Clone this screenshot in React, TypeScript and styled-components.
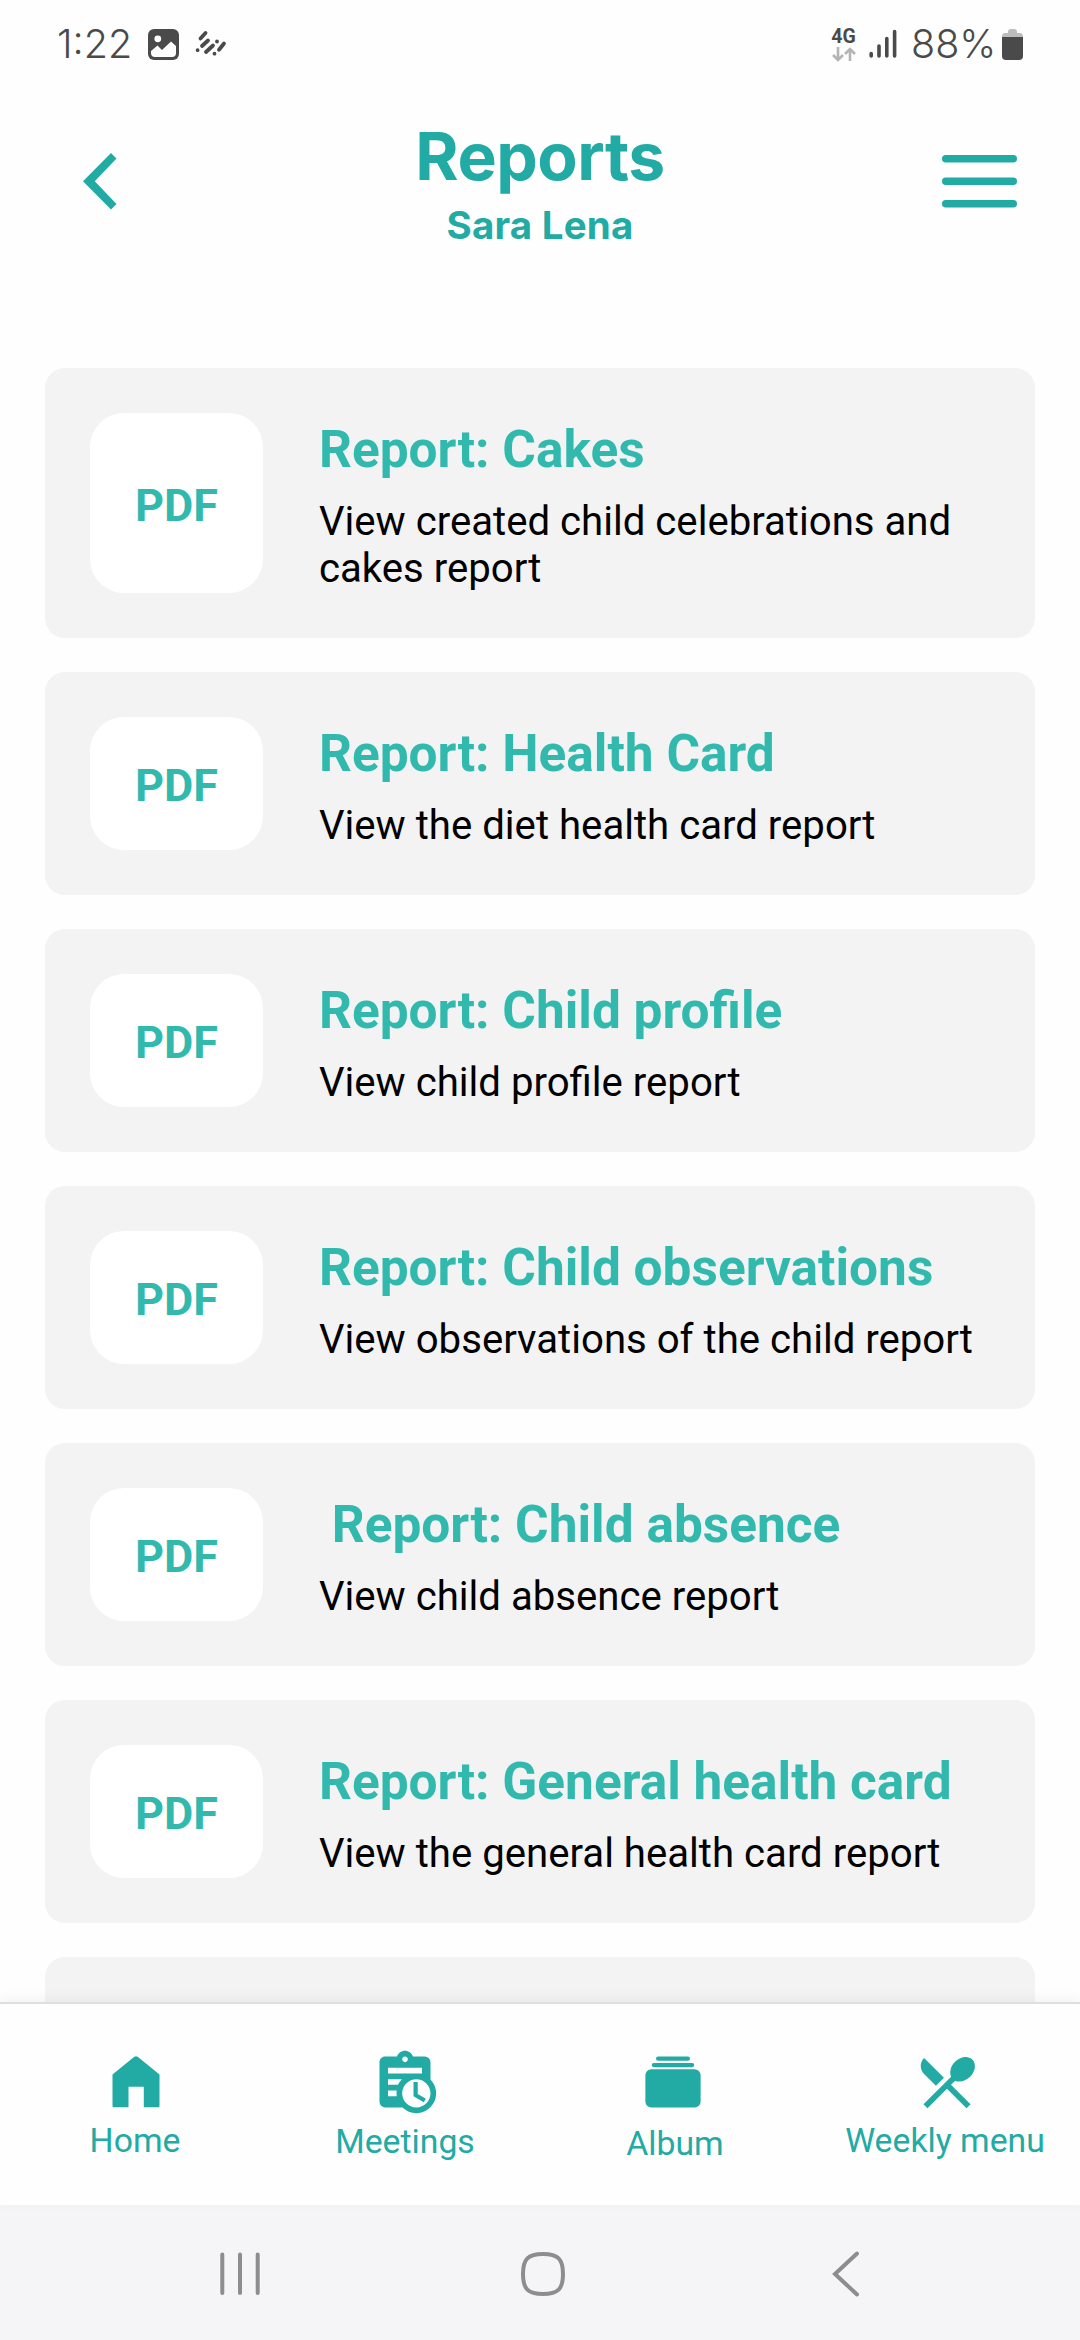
import React from 'react';
import styled, { createGlobalStyle } from 'styled-components';

const teal = '#22aaa4';
const tealSoft = '#32b9ae';
const ink = '#4a4a4a';

const GlobalStyle = createGlobalStyle`
  * { box-sizing: border-box; }
  body { margin: 0; background: #fefefe; }
`;

const Screen = styled.div`
  display: flex;
  flex-direction: column;
  width: 1080px;
  height: 2340px;
  overflow: hidden;
  background: #fefefe;
  font-family: Roboto, 'Liberation Sans', sans-serif;
`;

const Icon = styled.svg<{ $left?: number; $right?: number }>`
  display: block;
  flex: none;
  margin-left: ${p => p.$left ?? 0}px;
  margin-right: ${p => p.$right ?? 0}px;
`;

const StatusBar = styled.div`
  display: flex;
  align-items: center;
  justify-content: space-between;
  height: 88px;
  padding: 0 57px;
  color: ${ink};
`;

const StatusGroup = styled.div`
  display: flex;
  align-items: center;
`;

const StatusText = styled.span<{ $left?: number }>`
  width: 91px;
  margin-left: ${p => p.$left ?? 0}px;
  font: 300 39.5px/48px Inter, sans-serif;
  white-space: nowrap;
`;

const Network = styled.div`
  display: flex;
  flex-direction: column;
  align-items: center;
  width: 27px;
  margin-right: 12px;
  font: 700 19.5px/20px Roboto, sans-serif;
`;

const Header = styled.header`
  display: flex;
  align-items: flex-start;
  justify-content: space-between;
  height: 280px;
  padding: 0 63px 0 83px;
`;

const IconButton = styled.button`
  display: flex;
  width: 75px;
  margin: 65px 0 0;
  padding: 0;
  border: 0;
  background: none;
`;

const Heading = styled.div`
  display: flex;
  flex-direction: column;
  align-items: center;
  padding-top: 29px;
  margin-left: -20px;
  color: ${teal};
  font-family: Inter, Lato, sans-serif;
  white-space: nowrap;
`;

const Title = styled.h1`
  margin: 0;
  font-size: 66px;
  font-weight: 700;
  line-height: 78px;
  letter-spacing: -0.5px;
`;

const Subtitle = styled.p`
  margin: 8px 0 0;
  font-size: 38.5px;
  font-weight: 700;
  line-height: 44px;
  letter-spacing: 0.2px;
`;

const List = styled.main`
  display: flex;
  flex: 1;
  flex-direction: column;
  gap: 34px;
  min-height: 0;
  padding: 0 45px;
  overflow: hidden;
`;

const Card = styled.article`
  display: flex;
  flex: none;
  gap: 56px;
  padding: 45px;
  border-radius: 20px;
  background: #f3f3f3;
`;

const Badge = styled.div`
  display: flex;
  flex: none;
  align-items: center;
  justify-content: center;
  width: 173px;
  padding-top: 4px;
  border-radius: 34px;
  background: #fff;
  color: ${tealSoft};
  font-size: 45px;
  font-weight: 700;
`;

const CardBody = styled.div`
  flex: 1;
  min-width: 0;
  padding: 7px 0 1px;
`;

const CardTitle = styled.h2`
  margin: 0 0 18px;
  color: ${tealSoft};
  font-size: 51.4px;
  font-weight: 700;
  line-height: 60px;
  white-space: pre;
`;

const CardText = styled.p`
  margin: 0 -10px 0 0;
  color: #000;
  font-size: 40.15px;
  line-height: 47px;
`;

const TabBar = styled.nav`
  position: relative;
  display: grid;
  flex: none;
  grid-template-columns: repeat(4, 1fr);
  height: 203px;
  border-top: 2px solid #dfdfdf;
  background: #fefefe;
  box-shadow: 0 -3px 12px rgba(0, 0, 0, 0.05);
`;

const Tab = styled.a<{ $drop: number }>`
  display: flex;
  flex-direction: column;
  align-items: center;
  padding-top: 44px;
  color: ${teal};
  font-size: 33.75px;
  line-height: 40px;
  white-space: nowrap;

  span { margin-top: ${p => p.$drop}px; }
`;

const SystemBar = styled.footer`
  display: flex;
  flex: none;
  align-items: center;
  justify-content: space-between;
  height: 135px;
  padding: 2px 220px 0 218px;
  background: #f5f5f7;
`;

const reports = [
  { title: 'Report: Cakes', text: 'View created child celebrations and cakes report' },
  { title: 'Report: Health Card', text: 'View the diet health card report' },
  { title: 'Report: Child profile', text: 'View child profile report' },
  { title: 'Report: Child observations', text: 'View observations of the child report' },
  { title: ' Report: Child absence', text: 'View child absence report' },
  { title: 'Report: General health card', text: 'View the general health card report' },
];

const HomeIcon = () => (
  <Icon width="68" height="68" viewBox="0 0 68 68" fill={teal} $left={2}>
    <path d="M10.5 26.5 32.3 8.8Q34 7.5 35.7 8.8L57.5 26.5V58Q57.5 59.3 56.2 59.3H41.8V38.7H26.5V59.3H11.8Q10.5 59.3 10.5 58Z" />
  </Icon>
);

const MeetingsIcon = () => (
  <Icon width="68" height="68" viewBox="0 0 24 24" fill={teal}>
    <path d="M21 11.11V5a2 2 0 0 0-2-2h-4.18C14.4 1.84 13.3 1 12 1s-2.4.84-2.82 2H5c-1.1 0-2 .9-2 2v14a2 2 0 0 0 2 2h6.11c1.26 1.24 2.99 2 4.89 2 3.87 0 7-3.13 7-7 0-1.9-.76-3.63-2-4.89zM12 3c.55 0 1 .45 1 1s-.45 1-1 1-1-.45-1-1 .45-1 1-1zM6 7h12v2H6V7zm0 4h4.9c-.6.58-1.07 1.25-1.4 2H6v-2zm0 6v-2h3.08c-.11.66-.11 1.34 0 2H6zm10 4c-2.76 0-5-2.24-5-5s2.24-5 5-5 5 2.24 5 5-2.24 5-5 5zm.5-4.75 2.86 1.69-.75 1.22L15 17v-5h1.5v4.25z" />
  </Icon>
);

const AlbumIcon = () => (
  <Icon width="68" height="68" viewBox="0 0 512 512" fill={teal} $right={4}>
    <path d="M368 96H144a16 16 0 0 1 0-32h224a16 16 0 0 1 0 32zM400 144H112a16 16 0 0 1 0-32h288a16 16 0 0 1 0 32zM419.13 448H92.87A44.92 44.92 0 0 1 48 403.13V204.87A44.92 44.92 0 0 1 92.87 160h326.26A44.92 44.92 0 0 1 464 204.87v198.26A44.92 44.92 0 0 1 419.13 448z" />
  </Icon>
);

const MenuIcon = () => (
  <Icon width="68" height="68" viewBox="0 0 24 24" fill={teal} $left={3}>
    <path d="M8.1 13.34l2.83-2.83L3.91 3.5a4.008 4.008 0 0 0 0 5.66l4.19 4.18zm6.78-1.81c1.53.71 3.68.21 5.27-1.38 1.91-1.91 2.28-4.65.81-6.12-1.46-1.46-4.2-1.1-6.12.81-1.59 1.59-2.09 3.74-1.38 5.27L3.7 19.87l1.41 1.41L12 14.41l6.88 6.88 1.41-1.41L13.41 13l1.47-1.47z" />
  </Icon>
);

const tabs = [
  { label: 'Home', icon: <HomeIcon />, drop: 5 },
  { label: 'Meetings', icon: <MeetingsIcon />, drop: 6 },
  { label: 'Album', icon: <AlbumIcon />, drop: 8 },
  { label: 'Weekly menu', icon: <MenuIcon />, drop: 5 },
];

export default function App() {
  return (
    <Screen>
      <GlobalStyle />
      <StatusBar>
        <StatusGroup>
          <StatusText>1:22</StatusText>
          <Icon width="31" height="31" viewBox="0 0 31 31">
            <rect width="31" height="31" rx="6" fill={ink} />
            <circle cx="9.8" cy="9.8" r="3.4" fill="#fefefe" />
            <path d="M3 22 9.5 16.5 14 21 23 12.5 28 17V24Q28 28 24 28H7Q3 28 3 24Z" fill="#fefefe" />
          </Icon>
          <Icon width="32" height="28" viewBox="0 0 32 28" $left={16} fill="none" stroke={ink} strokeWidth="3.8" strokeLinecap="round">
            <path d="M5.5 8.5 10.5 3M7 16 13 10.5M11 22 18 15.5M22 11.5h.01M2.6 20.2h.01M19.5 23.7h.01M24 19.7 29 13.5" />
          </Icon>
        </StatusGroup>
        <StatusGroup>
          <Network>
            4G
            <Icon width="24" height="15" viewBox="0 0 24 15" fill="none" stroke="#b4b4b4" strokeWidth="2.6">
              <path d="M6 0V13M1 8 6 13 11 8M18 14V2M13 7 18 2 23 7" />
            </Icon>
          </Network>
          <Icon width="28" height="30" viewBox="0 0 28 30" stroke={ink} strokeWidth="3.6" strokeLinecap="round">
            <path d="M2.2 24.5V27M10 17V27M17.8 9.5V27M25.6 2.5V27" />
          </Icon>
          <StatusText $left={14}>88%</StatusText>
          <Icon width="21" height="31" viewBox="0 0 21 31">
            <path d="M6 3Q6 0 9 0H12Q15 0 15 3V4H18Q21 4 21 8H0Q0 4 3 4H6Z" fill="#bcbcbc" />
            <path d="M0 8H21V27Q21 31 17 31H4Q0 31 0 27Z" fill={ink} />
          </Icon>
        </StatusGroup>
      </StatusBar>

      <Header>
        <IconButton aria-label="Back">
          <Icon width="34" height="57" viewBox="0 0 34 57" fill={teal}>
            <path d="M28 0 33.5 5.5 11.8 28.3 33.5 51 28 56.5 0 28.3Z" />
          </Icon>
        </IconButton>
        <Heading>
          <Title>Reports</Title>
          <Subtitle>Sara Lena</Subtitle>
        </Heading>
        <IconButton aria-label="Menu">
          <Icon width="75" height="57" viewBox="0 0 75 57" stroke={teal} strokeWidth="7.5" strokeLinecap="round">
            <path d="M3.75 5.7H71.25M3.75 28.2H71.25M3.75 50.7H71.25" />
          </Icon>
        </IconButton>
      </Header>

      <List>
        {reports.map(r => (
          <Card key={r.title}>
            <Badge>PDF</Badge>
            <CardBody>
              <CardTitle>{r.title}</CardTitle>
              <CardText>{r.text}</CardText>
            </CardBody>
          </Card>
        ))}
        <Card />
      </List>

      <TabBar>
        {tabs.map(t => (
          <Tab key={t.label} $drop={t.drop}>
            {t.icon}
            <span>{t.label}</span>
          </Tab>
        ))}
      </TabBar>

      <SystemBar>
        <Icon width="44" height="46" viewBox="0 0 44 46" stroke="#8d8d90" strokeWidth="4" strokeLinecap="round">
          <path d="M4.3 3.5V42M22 3.5V42M39.7 3.5V42" />
        </Icon>
        <Icon width="46" height="46" viewBox="0 0 46 46" fill="none" stroke="#8d8d90" strokeWidth="4" $right={9}>
          <path d="M23 3C38 3 43 8 43 23S38 43 23 43 3 38 3 23 8 3 23 3Z" />
        </Icon>
        <Icon width="28" height="46" viewBox="0 0 28 46" fill="none" stroke="#8d8d90" strokeWidth="4" strokeLinecap="round">
          <path d="M25 2.5 3 23 25 43.5" />
        </Icon>
      </SystemBar>
    </Screen>
  );
}
